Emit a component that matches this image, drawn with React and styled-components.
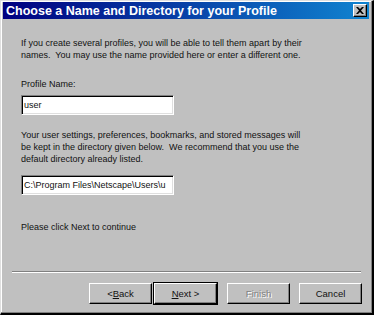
import styled, { createGlobalStyle } from 'styled-components';

const Global = createGlobalStyle`
    html, body { margin: 0; padding: 0; background: #c0c0c0; }
    body { font-family: "Liberation Sans", Arial, sans-serif; }
`;

const Window = styled.div`
    width: 374px;
    height: 315px;
    box-sizing: border-box;
    background: #c0c0c0;
    border-top: 1px solid #dfdfdf;
    border-left: 1px solid #dfdfdf;
    border-right: 2px solid #000;
    border-bottom: 2px solid #000;
    box-shadow: inset -1px -1px 0 #808080, inset 1px 1px 0 #fff;
    padding: 1px 3px 3px 2px;
    display: flex;
    flex-direction: column;
`;

const TitleBar = styled.div`
    height: 17px;
    display: flex;
    align-items: center;
    justify-content: space-between;
    padding: 0 2px 0 3px;
    background: linear-gradient(to right, #000080, #1084d0);
    color: #fff;
    font-weight: bold;
    font-size: 12.5px;
`;

const CloseButton = styled.div`
    width: 14px;
    height: 13px;
    box-sizing: border-box;
    background: #c0c0c0;
    border-top: 1px solid #fff;
    border-left: 1px solid #fff;
    border-right: 1px solid #000;
    border-bottom: 1px solid #000;
    box-shadow: inset -1px -1px 0 #808080;
    display: flex;
    align-items: center;
    justify-content: center;
`;

const Body = styled.div`
    flex: 1;
    display: flex;
    flex-direction: column;
    padding: 18px 0 0 18px;
    font-size: 9px;
    line-height: 12px;
    color: #111;
`;

const Para = styled.p`
    margin: 0 0 ${p => p.$gap || 0}px;
`;

const Field = styled.div`
    width: 153px;
    height: 20px;
    box-sizing: border-box;
    background: #fff;
    border-top: 1px solid #808080;
    border-left: 1px solid #808080;
    border-right: 1px solid #fff;
    border-bottom: 1px solid #fff;
    box-shadow: inset 1px 1px 0 #000, inset -1px -1px 0 #dfdfdf;
    padding: 0 2px;
    font-size: 9px;
    line-height: 18px;
    white-space: nowrap;
    overflow: hidden;
    margin-bottom: ${p => p.$gap || 0}px;
`;

const Separator = styled.div`
    margin: auto 8px 0 -9px;
    height: 0;
    border-top: 1px solid #808080;
    border-bottom: 1px solid #fff;
`;

const ButtonRow = styled.div`
    display: flex;
    justify-content: flex-end;
    padding: 10px 7px 6px 0;
`;

const Button = styled.div`
    width: 63px;
    height: 21px;
    box-sizing: border-box;
    margin-left: ${p => p.$gap || 0}px;
    display: flex;
    align-items: center;
    justify-content: center;
    font-size: 9.5px;
    color: ${p => (p.$disabled ? '#808080' : '#111')};
    text-shadow: ${p => (p.$disabled ? '1px 1px 0 #fff' : 'none')};
    background: #c0c0c0;
    border-top: 1px solid #fff;
    border-left: 1px solid #fff;
    border-right: 1px solid #000;
    border-bottom: 1px solid #000;
    box-shadow: inset -1px -1px 0 #808080;
    outline: ${p => (p.$default ? '1px solid #000' : 'none')};
    outline-offset: 0;
    u { text-decoration: underline; }
`;

export default function App() {
    return (
        <>
            <Global />
            <Window>
                <TitleBar>
                    <span>Choose a Name and Directory for your Profile</span>
                    <CloseButton>
                        <svg width="8" height="7" viewBox="0 0 8 7">
                            <path d="M0 0h2l2 2 2-2h2L5 3.5 8 7H6L4 5 2 7H0l3-3.5z" fill="#000" />
                        </svg>
                    </CloseButton>
                </TitleBar>
                <Body>
                    <Para $gap={17}>
                        If you create several profiles, you will be able to tell them apart by their<br />
                        names.&nbsp; You may use the name provided here or enter a different one.
                    </Para>
                    <Para $gap={5}>Profile Name:</Para>
                    <Field $gap={14}>user</Field>
                    <Para $gap={10}>
                        Your user settings, preferences, bookmarks, and stored messages will<br />
                        be kept in the directory given below.&nbsp; We recommend that you use the<br />
                        default directory already listed.
                    </Para>
                    <Field $gap={26}>C:\Program Files\Netscape\Users\u</Field>
                    <Para>Please click Next to continue</Para>
                    <Separator />
                    <ButtonRow>
                        <Button>&lt; <u>B</u>ack</Button>
                        <Button $default $gap={2}><u>N</u>ext &gt;</Button>
                        <Button $disabled $gap={10}>Finish</Button>
                        <Button $gap={9}>Cancel</Button>
                    </ButtonRow>
                </Body>
            </Window>
        </>
    );
}
